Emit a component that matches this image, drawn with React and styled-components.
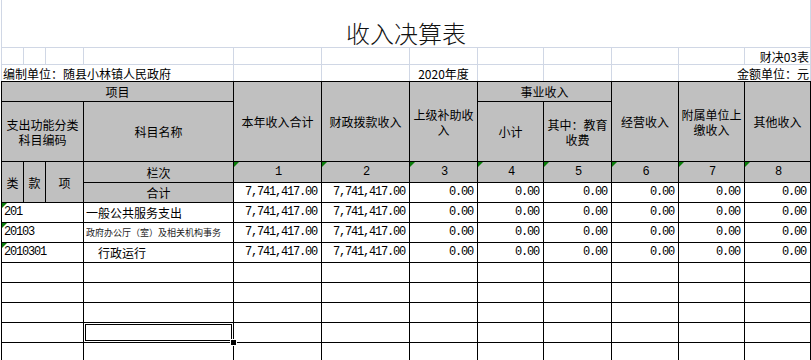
import React from "react";
import styled, { createGlobalStyle } from "styled-components";

const COLS = "21px 21px 37px 149px 87px 87px 67px 65px 67px 66px 65px 65px";
const CJK = `"Noto Sans CJK SC", "Liberation Sans", sans-serif`;
const NUM = `"Liberation Mono", "DejaVu Sans Mono", monospace`;

const GlobalStyle = createGlobalStyle`
  body {
    margin: 0;
    background: #fff;
    font-family: ${CJK};
    color: #000;
    overflow: hidden;
  }
`;

const Sheet = styled.div`
  padding-left: 1px;
  width: 810px;
`;

const TopGrid = styled.div`
  display: grid;
  grid-template-columns: ${COLS};
  grid-template-rows: 47px 16px 16px;
  gap: 1px;
  background: #d0d7e5;
  border-left: 1px solid #d0d7e5;
  border-right: 1px solid #d0d7e5;
`;

const Title = styled.div`
  grid-column: 1 / -1;
  background: #fff;
  display: flex;
  align-items: flex-end;
  justify-content: center;
  font-size: 24px;
  line-height: 26px;
  font-weight: 300;
  color: #111;
  padding-bottom: 1px;
`;

const InfoCell = styled.div`
  grid-column: ${({ $c }) => $c || "auto"};
  background: #fff;
  display: flex;
  align-items: flex-end;
  justify-content: ${({ $align }) =>
    $align === "right" ? "flex-end" : $align === "center" ? "center" : "flex-start"};
  padding: 0 1px 0 1px;
  font-size: 12px;
  line-height: 14px;
  white-space: nowrap;
`;

const Table = styled.div`
  display: grid;
  grid-template-columns: ${COLS};
  grid-template-rows: 19px 59px 20px 19px;
  grid-auto-rows: 19px;
  gap: 1px;
  background: #000;
  border: 1px solid #000;
  border-bottom: none;
`;

const Cell = styled.div`
  position: relative;
  grid-column: ${({ $c }) => $c || "auto"};
  grid-row: ${({ $r }) => $r || "auto"};
  background: ${({ $head }) => ($head ? "#c0c0c0" : "#fff")};
  display: flex;
  align-items: center;
  justify-content: ${({ $align }) =>
    $align === "right" ? "flex-end" : $align === "left" ? "flex-start" : "center"};
  text-align: center;
  font-size: 12px;
  line-height: 15px;
  padding: 0 1px;
  white-space: ${({ $wrap }) => ($wrap ? "normal" : "nowrap")};
  overflow: visible;

  &::after {
    content: "";
    display: ${({ $mark }) => ($mark ? "block" : "none")};
    position: absolute;
    top: 0;
    left: 0;
    border-top: 5px solid #0a7d0a;
    border-right: 5px solid transparent;
  }
`;

const Num = styled.span`
  font-family: ${NUM};
  font-size: 12px;
  letter-spacing: -1.2px;
  padding-right: 3px;
`;

const Code = styled.span`
  font-family: ${NUM};
  font-size: 12px;
  letter-spacing: -1.2px;
  padding-left: 1px;
`;

const Name = styled.span`
  font-size: ${({ $small }) => ($small ? "9px" : "12px")};
  padding-left: ${({ $indent }) => ($indent ? "13px" : "1px")};
  color: ${({ $small }) => ($small ? "#222" : "#000")};
`;

const Selection = styled.div`
  position: absolute;
  inset: -1px;
  border: 3px double #000;
  z-index: 2;
`;

const FillHandle = styled.div`
  position: absolute;
  right: -4px;
  bottom: -4px;
  width: 5px;
  height: 5px;
  background: #000;
  border: 1px solid #fff;
  z-index: 3;
`;

const TOTAL = ["7,741,417.00", "7,741,417.00", "0.00", "0.00", "0.00", "0.00", "0.00", "0.00"];

const rows = [
  { code: "201", name: "一般公共服务支出" },
  { code: "20103", name: "政府办公厅（室）及相关机构事务", small: true },
  { code: "2010301", name: "行政运行", indent: true },
];

const emptyRows = [0, 1, 2, 3, 4];

export default function App() {
  return (
    <>
      <GlobalStyle />
      <Sheet>
        <TopGrid>
          <Title>收入决算表</Title>
          {Array.from({ length: 11 }).map((_, i) => (
            <InfoCell key={i} />
          ))}
          <InfoCell $align="right">财决03表</InfoCell>
          <InfoCell $c="1 / 5">编制单位：随县小林镇人民政府</InfoCell>
          <InfoCell />
          <InfoCell />
          <InfoCell $align="center">2020年度</InfoCell>
          <InfoCell />
          <InfoCell />
          <InfoCell />
          <InfoCell $c="11 / 13" $align="right">金额单位：元</InfoCell>
        </TopGrid>

        <Table>
          <Cell $head $c="1 / 5" $r="1">项目</Cell>
          <Cell $head $c="5" $r="1 / 3">本年收入合计</Cell>
          <Cell $head $c="6" $r="1 / 3">财政拨款收入</Cell>
          <Cell $head $wrap $c="7" $r="1 / 3">上级补助收入</Cell>
          <Cell $head $c="8 / 10" $r="1">事业收入</Cell>
          <Cell $head $c="10" $r="1 / 3">经营收入</Cell>
          <Cell $head $wrap $c="11" $r="1 / 3">附属单位上缴收入</Cell>
          <Cell $head $c="12" $r="1 / 3">其他收入</Cell>

          <Cell $head $wrap $c="1 / 4" $r="2">支出功能分类科目编码</Cell>
          <Cell $head $c="4" $r="2">科目名称</Cell>
          <Cell $head $c="8" $r="2">小计</Cell>
          <Cell $head $wrap $c="9" $r="2">其中：教育收费</Cell>

          <Cell $head $c="1" $r="3 / 5">类</Cell>
          <Cell $head $c="2" $r="3 / 5">款</Cell>
          <Cell $head $c="3" $r="3 / 5">项</Cell>
          <Cell $head $c="4" $r="3">栏次</Cell>
          {TOTAL.map((_, i) => (
            <Cell key={i} $head $mark $c={String(i + 5)} $r="3">
              <Code>{i + 1}</Code>
            </Cell>
          ))}
          <Cell $head $c="4" $r="4">合计</Cell>
          {TOTAL.map((v, i) => (
            <Cell key={i} $align="right" $c={String(i + 5)} $r="4">
              <Num>{v}</Num>
            </Cell>
          ))}

          {rows.map((row) => (
            <React.Fragment key={row.code}>
              <Cell $c="span 3" $align="left" $mark>
                <Code>{row.code}</Code>
              </Cell>
              <Cell $align="left">
                <Name $small={row.small} $indent={row.indent}>{row.name}</Name>
              </Cell>
              {TOTAL.map((v, i) => (
                <Cell key={i} $align="right">
                  <Num>{v}</Num>
                </Cell>
              ))}
            </React.Fragment>
          ))}

          {emptyRows.map((r) => (
            <React.Fragment key={r}>
              <Cell $c="span 3" />
              <Cell>
                {r === 3 && (
                  <>
                    <Selection />
                    <FillHandle />
                  </>
                )}
              </Cell>
              {TOTAL.map((_, i) => (
                <Cell key={i} />
              ))}
            </React.Fragment>
          ))}
        </Table>
      </Sheet>
    </>
  );
}
